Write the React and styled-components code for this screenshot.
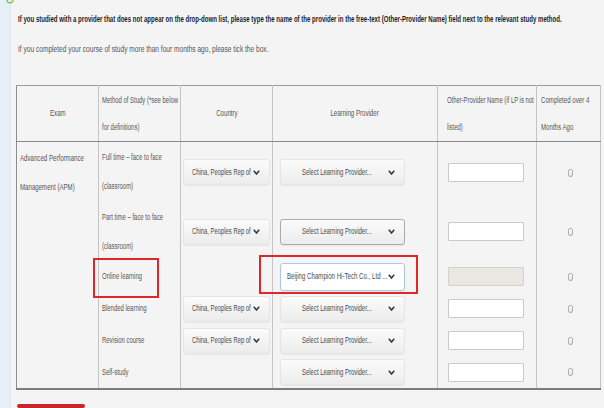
import styled, { createGlobalStyle } from 'styled-components';

const GlobalStyle = createGlobalStyle`
  html, body {
    margin: 0;
    padding: 0;
  }
  body {
    background: #f4f4f4;
    font-family: 'Liberation Sans', Arial, sans-serif;
    color: #555;
  }
`;

// the source page is a horizontally squashed screenshot, so text is narrowed
const Squeeze = styled.span`
  display: inline-block;
  white-space: nowrap;
  transform: scaleX(${(p) => p.$x || 0.72});
  transform-origin: ${(p) => (p.$center ? 'center' : 'left')} center;
`;

const Page = styled.div`
  display: flex;
  width: 604px;
  height: 408px;
  overflow: hidden;
`;

const SideStrip = styled.div`
  position: relative;
  flex-shrink: 0;
  width: 10px;
  background: #e6eef8;
  border-right: 1px solid #dfe7f1;
`;

const StatusArc = styled.svg`
  position: absolute;
  top: 0;
  left: 6px;
`;

const Content = styled.div`
  display: flex;
  flex-direction: column;
  padding-left: 5px;
`;

const Lead = styled.p`
  margin: 13px 0 0 2px;
  font-size: 8.5px;
  line-height: 12px;
  font-weight: bold;
  color: #1e1e1e;
`;

const Note = styled.p`
  margin: 18px 0 0 2px;
  font-size: 8.5px;
  line-height: 12px;
  color: #555;
`;

const Table = styled.table`
  margin-top: 30px;
  width: 584px;
  table-layout: fixed;
  border-collapse: collapse;
  border-top: 1px solid #9c9c9c;
  border-left: 1px solid #8c8c8c;
  border-right: 1px solid #b4b4b4;
  border-bottom: 2px solid #7c7c7c;
  font-size: 8.5px;
  color: #555;
`;

const Col = styled.col`
  width: ${(p) => p.$w}px;
`;

const HeadCell = styled.th`
  height: 55px;
  padding: 0 0 0 ${(p) => p.$pl || 0}px;
  text-align: ${(p) => p.$align || 'center'};
  font-weight: normal;
  line-height: 27px;
  white-space: nowrap;
  vertical-align: middle;
  border-right: 1px solid #c4c4c4;
  border-bottom: 1px solid #8a8a8a;
`;

const Row = styled.tr`
  height: ${(p) => p.$h}px;
`;

const Cell = styled.td`
  padding: 0 0 0 ${(p) => p.$pl || 0}px;
  text-align: ${(p) => p.$align || 'left'};
  vertical-align: ${(p) => p.$valign || 'middle'};
  line-height: 29px;
  white-space: nowrap;
  border-right: 1px solid #c4c4c4;
`;

const ExamCell = styled(Cell)`
  padding-top: 2px;
`;

const Anchor = styled.div`
  position: relative;
  width: ${(p) => (p.$w ? `${p.$w}px` : 'auto')};
`;

const Highlight = styled.div`
  position: absolute;
  top: ${(p) => p.$t}px;
  right: ${(p) => p.$r}px;
  bottom: ${(p) => p.$b}px;
  left: ${(p) => p.$l}px;
  border: 2px solid #e0252b;
  pointer-events: none;
`;

const SelectBox = styled.div`
  display: flex;
  align-items: center;
  box-sizing: border-box;
  width: ${(p) => p.$w}px;
  height: ${(p) => p.$h || 26}px;
  padding: 0 9px 0 ${(p) => p.$pl}px;
  background: ${(p) =>
    p.$active ? '#fff' : 'linear-gradient(#fbfbfb, #ececec)'};
  border: 1px solid
    ${(p) => (p.$active ? '#abc8e6' : p.$hover ? '#ababab' : '#e6e6e6')};
  border-radius: 3px;
  box-shadow: 0 1px 1px rgba(0, 0, 0, 0.06);
  color: #4a4a4a;
  line-height: 1;
`;

const SelectText = styled(Squeeze)`
  flex: 1;
  min-width: 0;
`;

const Chevron = () => (
  <svg width='7' height='5' viewBox='0 0 7 5'>
    <path d='M0.8 0.8 L3.5 4 L6.2 0.8' fill='none' stroke='#3a3a3a' strokeWidth='1.6' />
  </svg>
);

const TextInput = styled.input`
  display: block;
  box-sizing: border-box;
  width: 76px;
  height: 19px;
  margin: 0;
  padding: 0 3px;
  border: 1px solid ${(p) => (p.disabled ? '#d3d1cb' : '#c9c9c9')};
  background: ${(p) => (p.disabled ? '#e9e7e2' : '#fff')};
  border-radius: 1px;
`;

const TickBox = styled.span`
  display: inline-block;
  box-sizing: border-box;
  width: 5px;
  height: 8px;
  margin-left: 4px;
  border: 1px solid #b0b0b0;
  border-radius: 2px;
  background: linear-gradient(#fdfdfd, #e4e4e4);
  vertical-align: middle;
`;

const RedButton = styled.div`
  margin: 14px 0 0 1px;
  width: 68px;
  height: 20px;
  background: #c9252c;
  border-radius: 2px;
`;

const rows = [
  { h: 61, method: ['Full time – face to face', '(classroom)'], country: true },
  { h: 57, method: ['Part time – face to face', '(classroom)'], country: true, hover: true },
  { h: 32, method: ['Online learning'], online: true },
  { h: 32, method: ['Blended learning'], country: true },
  { h: 32, method: ['Revision course'], country: true },
  { h: 32, method: ['Self-study'] },
];

function ProviderSelect({ row }) {
  if (row.online) {
    return (
      <Anchor $w={125}>
        <SelectBox $w={125} $h={28} $pl={6} $active>
          <SelectText $x={0.72}>Beijing Champion Hi-Tech Co., Ltd ...</SelectText>
          <Chevron />
        </SelectBox>
        <Highlight $t={-8} $r={-13} $b={-3} $l={-21} />
      </Anchor>
    );
  }
  return (
    <SelectBox $w={125} $pl={21} $hover={row.hover}>
      <SelectText $x={0.7}>Select Learning Provider...</SelectText>
      <Chevron />
    </SelectBox>
  );
}

export default function App() {
  return (
    <>
      <GlobalStyle />
      <Page>
        <SideStrip>
          <StatusArc width='8' height='4' viewBox='0 0 8 4'>
            <path d='M1 0 A3 3 0 0 0 7 0' fill='none' stroke='#79b548' strokeWidth='1.2' />
          </StatusArc>
        </SideStrip>
        <Content>
          <Lead>
            <Squeeze $x={0.715}>
              If you studied with a provider that does not appear on the drop-down list, please type the name of the provider in the free-text (Other-Provider Name) field next to the relevant study method.
            </Squeeze>
          </Lead>
          <Note>
            <Squeeze $x={0.775}>
              If you completed your course of study more than four months ago, please tick the box.
            </Squeeze>
          </Note>
          <Table>
            <colgroup>
              <Col $w={82} />
              <Col $w={82} />
              <Col $w={92} />
              <Col $w={165} />
              <Col $w={99} />
              <Col $w={64} />
            </colgroup>
            <thead>
              <tr>
                <HeadCell>
                  <Squeeze $center>Exam</Squeeze>
                </HeadCell>
                <HeadCell $align='left' $pl={3}>
                  <Squeeze $x={0.7}>
                    Method of Study (*see below
                    <br />
                    for definitions)
                  </Squeeze>
                </HeadCell>
                <HeadCell>
                  <Squeeze $center>Country</Squeeze>
                </HeadCell>
                <HeadCell>
                  <Squeeze $center>Learning Provider</Squeeze>
                </HeadCell>
                <HeadCell $align='left' $pl={9}>
                  <Squeeze $x={0.69}>
                    Other-Provider Name (if LP is not
                    <br />
                    listed)
                  </Squeeze>
                </HeadCell>
                <HeadCell $align='left' $pl={4}>
                  <Squeeze>
                    Completed over 4
                    <br />
                    Months Ago
                  </Squeeze>
                </HeadCell>
              </tr>
            </thead>
            <tbody>
              {rows.map((row, i) => (
                <Row key={i} $h={row.h}>
                  {i === 0 && (
                    <ExamCell rowSpan={6} $valign='top' $pl={3}>
                      <Squeeze>
                        Advanced Performance
                        <br />
                        Management (APM)
                      </Squeeze>
                    </ExamCell>
                  )}
                  <Cell $pl={3}>
                    {row.online ? (
                      <Anchor>
                        <Squeeze $x={0.7}>Online learning</Squeeze>
                        <Highlight $t={-4} $r={21} $b={-7} $l={-9} />
                      </Anchor>
                    ) : (
                      <Squeeze $x={0.7}>
                        {row.method.map((line, j) => (
                          <span key={j}>
                            {j > 0 && <br />}
                            {line}
                          </span>
                        ))}
                      </Squeeze>
                    )}
                  </Cell>
                  <Cell $pl={2}>
                    {row.country && (
                      <SelectBox $w={87} $pl={8}>
                        <SelectText $x={0.69}>China, Peoples Rep of</SelectText>
                        <Chevron />
                      </SelectBox>
                    )}
                  </Cell>
                  <Cell $pl={7}>
                    <ProviderSelect row={row} />
                  </Cell>
                  <Cell $pl={10}>
                    <TextInput type='text' disabled={row.online} />
                  </Cell>
                  <Cell $align='center'>
                    <TickBox />
                  </Cell>
                </Row>
              ))}
            </tbody>
          </Table>
          <RedButton />
        </Content>
      </Page>
    </>
  );
}
